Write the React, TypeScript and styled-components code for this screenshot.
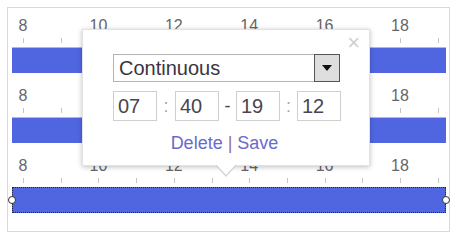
import styled, { createGlobalStyle } from "styled-components";

const GlobalStyle = createGlobalStyle`
  html, body {
    margin: 0;
    padding: 0;
    background: #ffffff;
    font-family: "Liberation Sans", Arial, sans-serif;
  }
`;

const HOUR_WIDTH = 37.7;
const FIRST_HOUR = 8;
const FIRST_OFFSET = 15;
const hours = [8, 9, 10, 11, 12, 13, 14, 15, 16, 17, 18, 19];

const hourX = (h: number) => FIRST_OFFSET + (h - FIRST_HOUR) * HOUR_WIDTH;

const Page = styled.div`
  padding: 7px;
  width: 456px;
  height: 234px;
  box-sizing: border-box;
`;

const Frame = styled.div`
  position: relative;
  width: 443px;
  height: 225px;
  box-sizing: border-box;
  border: 1px solid #d9d9d9;
  background: #ffffff;
`;

const Row = styled.div`
  display: flex;
  flex-direction: column;
  height: 70px;
`;

const Ruler = styled.div`
  position: relative;
  height: 39px;
`;

const Label = styled.span`
  position: absolute;
  top: 9px;
  transform: translateX(-50%);
  font-size: 16px;
  line-height: 18px;
  color: #666666;
`;

const Tick = styled.span`
  position: absolute;
  top: 30px;
  width: 1px;
  height: 5px;
  background: #c4c4c4;
`;

const Track = styled.div`
  padding: 0 3px 0 4px;
`;

const Bar = styled.div<{ $selected?: boolean }>`
  position: relative;
  height: 26px;
  box-sizing: border-box;
  background: #4f66e0;
  border-top: 1px solid ${(p) => (p.$selected ? "#2a2a50" : "#a9b7f2")};
  ${(p) =>
    p.$selected &&
    `
    border: 1px dotted #23234a;
  `}
`;

const Handle = styled.span<{ $side: "left" | "right" }>`
  position: absolute;
  top: 50%;
  ${(p) => p.$side}: -5px;
  width: 6px;
  height: 6px;
  margin-top: -4px;
  border-radius: 50%;
  border: 1px solid #333333;
  background: #ffffff;
`;

const Popup = styled.div`
  position: absolute;
  left: 74px;
  top: 21px;
  width: 288px;
  height: 137px;
  box-sizing: border-box;
  padding: 24px 29px 0 30px;
  background: #ffffff;
  border: 1px solid #e2e2e2;
  box-shadow: 0 1px 5px rgba(0, 0, 0, 0.25);
  display: flex;
  flex-direction: column;
  gap: 9px;
  z-index: 2;

  &::before,
  &::after {
    content: "";
    position: absolute;
    left: 50%;
    border-style: solid;
    border-color: transparent;
  }
  &::before {
    bottom: -12px;
    margin-left: -11px;
    border-width: 12px 11px 0 11px;
    border-top-color: #d4d4d4;
  }
  &::after {
    bottom: -10px;
    margin-left: -10px;
    border-width: 11px 10px 0 10px;
    border-top-color: #ffffff;
  }
`;

const Close = styled.span`
  position: absolute;
  top: 2px;
  right: 9px;
  font-size: 22px;
  line-height: 22px;
  color: #cfcfcf;
`;

const Select = styled.div`
  display: flex;
  align-items: stretch;
  height: 28px;
  box-sizing: border-box;
  border: 1px solid #b4b4b4;
`;

const SelectText = styled.span`
  flex: 1;
  padding-left: 5px;
  font-size: 20px;
  line-height: 26px;
  color: #3a3440;
`;

const SelectButton = styled.span`
  width: 26px;
  display: flex;
  align-items: center;
  justify-content: center;
  box-sizing: border-box;
  border: 1px solid #555555;
  margin: -1px -1px -1px 0;
  background: #dedede;

  &::after {
    content: "";
    border-style: solid;
    border-width: 6px 5px 0 5px;
    border-color: #111111 transparent transparent transparent;
  }
`;

const TimeRow = styled.div`
  display: flex;
  align-items: center;
  height: 30px;
`;

const TimeInput = styled.span`
  flex-shrink: 0;
  width: 44px;
  height: 30px;
  box-sizing: border-box;
  border: 1px solid #cfcfcf;
  padding-left: 4px;
  font-size: 20px;
  line-height: 28px;
  color: #4a4450;
`;

const Sep = styled.span<{ $w: number; $dark?: boolean }>`
  flex-shrink: 0;
  width: ${(p) => p.$w}px;
  text-align: center;
  font-size: 18px;
  line-height: 20px;
  color: ${(p) => (p.$dark ? "#444444" : "#a8a8a8")};
`;

const Actions = styled.div`
  display: flex;
  justify-content: center;
  align-items: center;
  gap: 5px;
  margin-top: 3px;
  padding-right: 4px;
  font-size: 18px;
  line-height: 20px;
`;

const Link = styled.a`
  color: #6a6acb;
  text-decoration: none;
  cursor: pointer;
`;

const Divider = styled.span`
  color: #9a6a9e;
`;

function TimeRuler() {
  return (
    <Ruler>
      {hours
        .filter((h) => h % 2 === 0)
        .map((h) => (
          <Label key={"l" + h} style={{ left: hourX(h) }}>
            {h}
          </Label>
        ))}
      {hours.map((h) => (
        <Tick key={"t" + h} style={{ left: hourX(h) }} />
      ))}
    </Ruler>
  );
}

export default function App() {
  const rows = [false, false, true];
  return (
    <Page>
      <GlobalStyle />
      <Frame>
        {rows.map((selected, i) => (
          <Row key={i}>
            <TimeRuler />
            <Track>
              <Bar $selected={selected}>
                {selected && (
                  <>
                    <Handle $side="left" />
                    <Handle $side="right" />
                  </>
                )}
              </Bar>
            </Track>
          </Row>
        ))}
        <Popup>
          <Close>×</Close>
          <Select>
            <SelectText>Continuous</SelectText>
            <SelectButton />
          </Select>
          <TimeRow>
            <TimeInput>07</TimeInput>
            <Sep $w={18}>:</Sep>
            <TimeInput>40</TimeInput>
            <Sep $w={17} $dark>-</Sep>
            <TimeInput>19</TimeInput>
            <Sep $w={17}>:</Sep>
            <TimeInput>12</TimeInput>
          </TimeRow>
          <Actions>
            <Link>Delete</Link>
            <Divider>|</Divider>
            <Link>Save</Link>
          </Actions>
        </Popup>
      </Frame>
    </Page>
  );
}
